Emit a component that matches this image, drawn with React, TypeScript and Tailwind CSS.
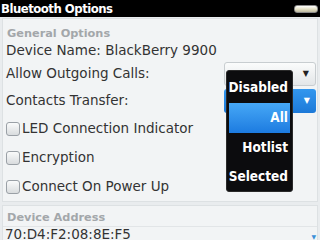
import React from "react";

const COND = '"DejaVu Sans Condensed", "DejaVu Sans", sans-serif';

function Checkbox() {
  return (
    <div className="w-[14px] h-[14px] rounded-[3px] border border-[#9aa0a6] bg-gradient-to-b from-[#fafbfb] to-[#d9dcde] shrink-0" />
  );
}

export default function App() {
  return (
    <div
      className="w-[320px] h-[240px] overflow-hidden bg-[#e9ecee] relative flex flex-col"
      style={{ fontFamily: '"DejaVu Sans", sans-serif' }}
    >
      {/* title bar */}
      <div className="h-[17px] bg-black flex items-center justify-between pl-[1px] pr-[2px] shrink-0">
        <span
          className="text-white font-bold text-[13px] leading-none tracking-[-0.5px]"
          style={{ fontFamily: COND, fontStretch: "condensed" }}
        >
          Bluetooth Options
        </span>
        <div className="w-[24px] h-[8px] rounded-[3px] border border-[#8a8a8a] bg-gradient-to-b from-[#ffffff] via-[#e7e3c8] to-[#bdb9a0]" />
      </div>

      {/* card 1 */}
      <div className="mx-[2px] mt-[1px] h-[184px] bg-[#f2f4f5] border border-[#dde1e3] flex flex-col">
        <div className="h-[22px] flex items-end pl-[4px] pb-[2px] text-[11.3px] font-bold text-[#a3a7aa] leading-none">
          General Options
        </div>
        <div className="h-[20px] flex items-center pl-[3px] text-[13.5px] text-[#333] leading-none whitespace-nowrap">
          Device Name: BlackBerry 9900
        </div>
        <div className="h-[26px] flex items-center justify-between pl-[3px] pr-[1px]">
          <span className="text-[13.5px] text-[#333] leading-none">Allow Outgoing Calls:</span>
          <div className="w-[92px] h-[24px] rounded-[3px] border border-[#c8cdd0] bg-gradient-to-b from-[#fbfcfc] to-[#e3e6e8] flex items-center justify-end pr-[6px] relative">
            <span className="absolute left-[17px] top-[3px] text-[13.5px] text-[#333]">Always</span>
            <span className="text-[8px] text-[#222]">▼</span>
          </div>
        </div>
        <div className="h-[28px] flex items-center justify-between pl-[3px] pr-[1px]">
          <span className="text-[13.5px] text-[#333] leading-none">Contacts Transfer:</span>
          <div className="w-[92px] h-[24px] rounded-[3px] bg-gradient-to-b from-[#3397ee] to-[#1c79d8] flex items-center justify-end pr-[6px]">
            <span className="text-[8px] text-white">▼</span>
          </div>
        </div>
        <div className="h-[29px] flex items-center pl-[3px] gap-[2px]">
          <Checkbox />
          <span className="text-[13.5px] text-[#333] leading-none">LED Connection Indicator</span>
        </div>
        <div className="h-[29px] flex items-center pl-[3px] gap-[2px]">
          <Checkbox />
          <span className="text-[13.5px] text-[#333] leading-none">Encryption</span>
        </div>
        <div className="h-[29px] flex items-center pl-[3px] gap-[2px]">
          <Checkbox />
          <span className="text-[13.5px] text-[#333] leading-none">Connect On Power Up</span>
        </div>
      </div>

      {/* card 2 */}
      <div className="mx-[2px] mt-[3px] flex-1 bg-[#f2f4f5] border border-[#dde1e3] flex flex-col">
        <div className="h-[21px] flex items-end pl-[4px] pb-[3px] text-[11.3px] font-bold text-[#a3a7aa] leading-none border-b border-[#e2e5e7]">
          Device Address
        </div>
        <div className="h-[18px] flex items-start pt-[1px] pl-[2px] text-[13.5px] text-[#333] leading-none">
          70:D4:F2:08:8E:F5
        </div>
      </div>
      <span className="absolute right-[4px] bottom-[0px] text-[6px] text-[#3a8fd8] leading-none">▼</span>

      {/* popup menu */}
      <div
        className="absolute left-[226px] top-[70px] w-[67px] h-[122px] bg-[#0c0c0e] rounded-[3px] border border-[#2a2a2a] flex flex-col items-stretch pt-[2px] px-[2px]"
        style={{ fontFamily: COND, fontStretch: "condensed" }}
      >
        <div className="h-[30px] flex items-center justify-end pr-[2px] text-white font-bold text-[13.5px] leading-none">
          Disabled
        </div>
        <div className="h-[30px] flex items-center justify-end pr-[2px] text-white font-bold text-[13.5px] leading-none bg-gradient-to-b from-[#46a8f6] to-[#1c7be0]">
          All
        </div>
        <div className="h-[29px] flex items-center justify-end pr-[2px] text-white font-bold text-[13.5px] leading-none">
          Hotlist
        </div>
        <div className="h-[29px] flex items-center justify-end pr-[2px] text-white font-bold text-[13.5px] leading-none">
          Selected
        </div>
      </div>
    </div>
  );
}
